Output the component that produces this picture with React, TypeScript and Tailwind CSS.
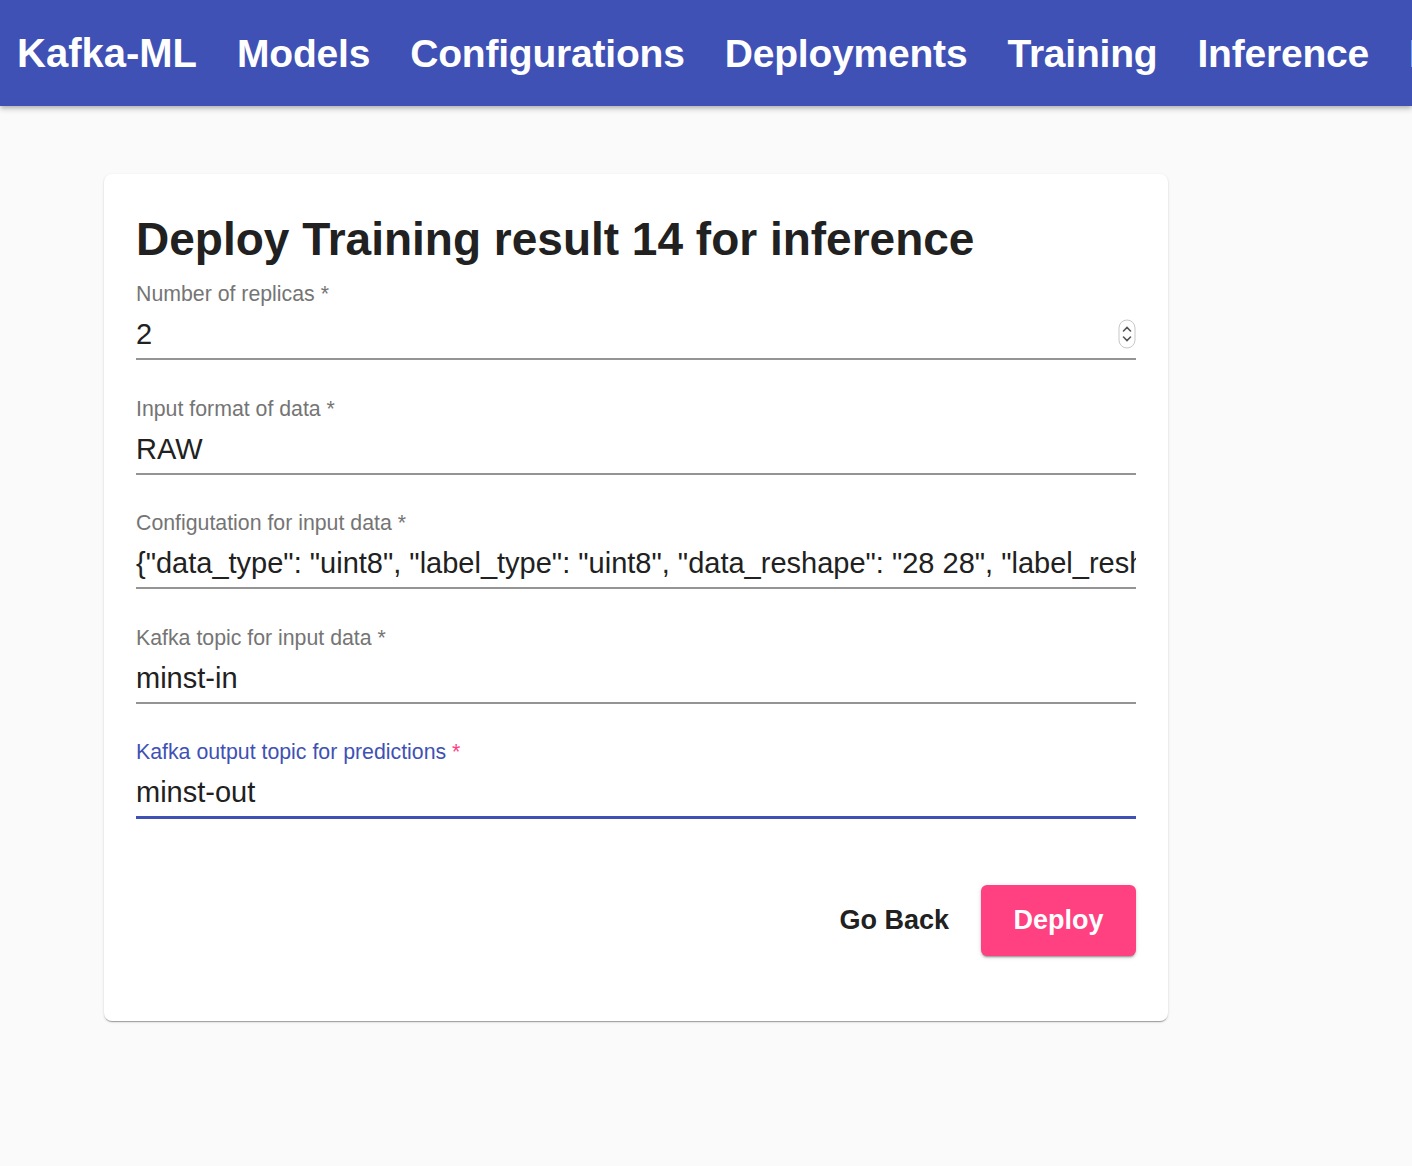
import React from 'react';

interface Field {
  label: string;
  value: string;
  focused?: boolean;
  number?: boolean;
}

const navItems = ['Models', 'Configurations', 'Deployments', 'Training', 'Inference', 'Datasources'];

const fields: Field[] = [
  { label: 'Number of replicas', value: '2', number: true },
  { label: 'Input format of data', value: 'RAW' },
  {
    label: 'Configutation for input data',
    value: '{"data_type": "uint8", "label_type": "uint8", "data_reshape": "28 28", "label_reshape": ""}',
  },
  { label: 'Kafka topic for input data', value: 'minst-in' },
  { label: 'Kafka output topic for predictions', value: 'minst-out', focused: true },
];

// little up/down stepper drawn by the browser on number inputs
const Stepper = () => (
  <svg width="18" height="30" viewBox="0 0 18 30" className="shrink-0">
    <rect x="1" y="1" width="16" height="28" rx="8" fill="#fff" stroke="#c8c8c8" strokeWidth="1" />
    <path d="M5.5 12 L9 8.5 L12.5 12" fill="none" stroke="#555" strokeWidth="1.6" strokeLinecap="round" />
    <path d="M5.5 18 L9 21.5 L12.5 18" fill="none" stroke="#555" strokeWidth="1.6" strokeLinecap="round" />
  </svg>
);

const TextField = ({ label, value, focused, number }: Field) => (
  <div className="flex flex-col">
    <div className={`text-[21.3px] leading-[24px] ${focused ? 'text-[#3f51b5]' : 'text-[#757575]'}`}>
      {label} <span className={focused ? 'text-[#ff4081]' : ''}>*</span>
    </div>
    <div className="mt-[12px] flex items-center h-[32px]">
      <div className="flex-1 overflow-hidden whitespace-nowrap text-[29px] leading-[32px] text-[#212121]">{value}</div>
      {number && <Stepper />}
    </div>
    <div className={focused ? 'mt-[8px] h-[3px] bg-[#3f51b5]' : 'mt-[8px] h-[2px] bg-[#949494]'}></div>
  </div>
);

const App = () => {
  return (
    <div className="min-h-[1166px] bg-[#fafafa]" style={{ fontFamily: '"Liberation Sans", Arial, sans-serif' }}>
      {/* App bar */}
      <header className="h-[106px] bg-[#3f51b5] shadow-[0_2px_4px_-1px_rgba(0,0,0,0.2),0_4px_5px_0_rgba(0,0,0,0.14)] overflow-hidden">
        <nav className="h-full flex items-center gap-[40px] pl-[17px] whitespace-nowrap">
          <span className="text-white text-[40px] font-bold leading-none">Kafka-ML</span>
          {navItems.map((item) => (
            <span key={item} className="text-white text-[39px] tracking-[-0.2px] font-bold leading-none">
              {item}
            </span>
          ))}
        </nav>
      </header>

      <main className="pt-[68px] pl-[104px]">
        <div className="w-[1064px] bg-white rounded-[8px] shadow-[0_2px_1px_-1px_rgba(0,0,0,0.2),0_1px_1px_0_rgba(0,0,0,0.14),0_1px_3px_0_rgba(0,0,0,0.12)] px-[32px] pt-[38px] pb-[65px]">
          <h1 className="text-[46px] leading-[54px] font-bold text-[#212121]">Deploy Training result 14 for inference</h1>

          <div className="mt-[16px] flex flex-col gap-[36.5px]">
            {fields.map((f) => (
              <TextField key={f.label} {...f} />
            ))}
          </div>

          <div className="mt-[66px] flex justify-end items-center gap-[32px]">
            <button className="text-[27px] font-bold text-[#212121] leading-none">Go Back</button>
            <button className="w-[155px] h-[71px] rounded-[6px] bg-[#ff4081] text-white text-[27px] font-bold shadow-[0_3px_1px_-2px_rgba(0,0,0,0.2),0_2px_2px_0_rgba(0,0,0,0.14),0_1px_5px_0_rgba(0,0,0,0.12)]">
              Deploy
            </button>
          </div>
        </div>
      </main>
    </div>
  );
};

export default App;
